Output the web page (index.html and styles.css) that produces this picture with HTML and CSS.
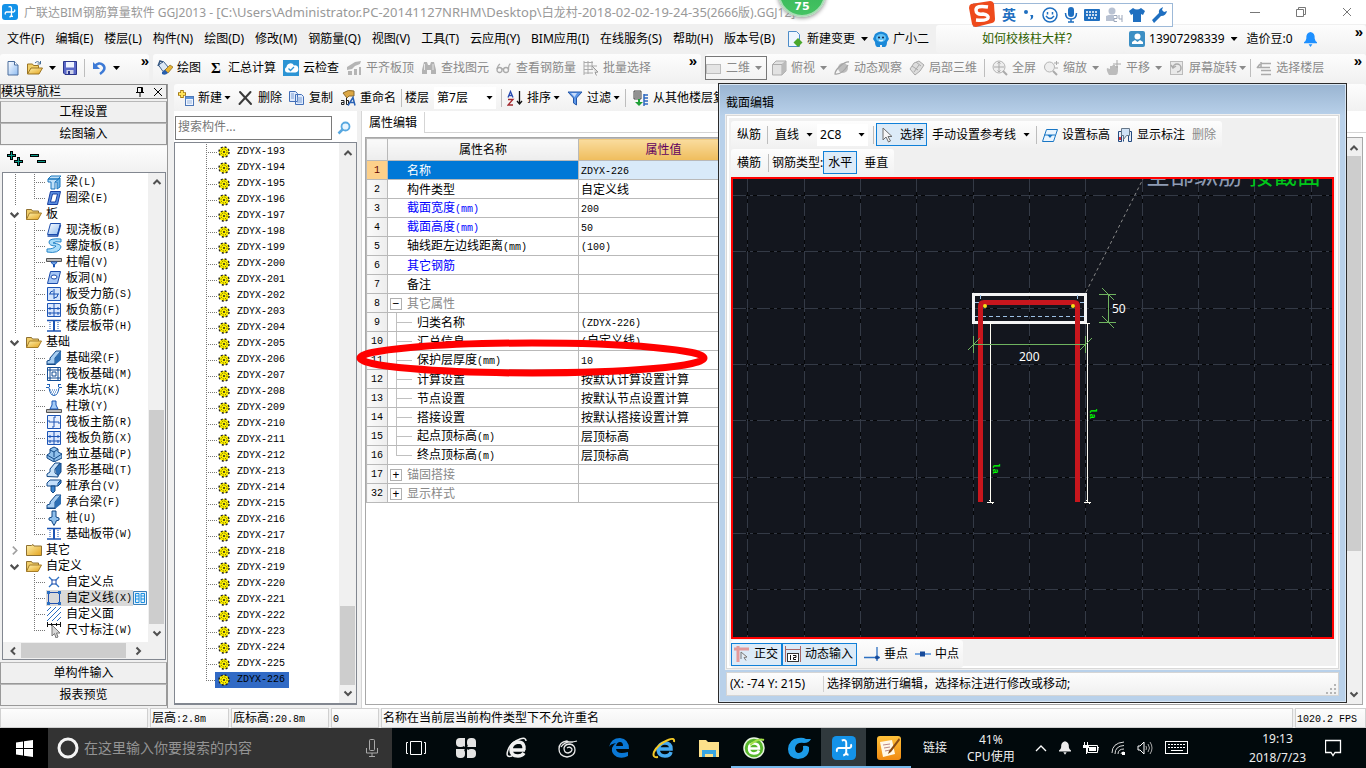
FILE: index.html
```html
<!DOCTYPE html>
<html lang="zh-CN">
<head>
<meta charset="utf-8">
<title>广联达BIM钢筋算量软件 GGJ2013</title>
<link rel="stylesheet" href="styles.css">
</head>
<body>
<svg class="defs" aria-hidden="true">
<defs>
<linearGradient id="gy" x1="0" y1="0" x2="1" y2="1"><stop offset="0" stop-color="#fff3b0"/><stop offset="1" stop-color="#e3a21c"/></linearGradient>
<linearGradient id="gb" x1="0" y1="0" x2="1" y2="1"><stop offset="0" stop-color="#fff"/><stop offset="1" stop-color="#8fbcf2"/></linearGradient>
<linearGradient id="go" x1="0" y1="0" x2="0" y2="1"><stop offset="0" stop-color="#ffc13a"/><stop offset="1" stop-color="#f08a12"/></linearGradient>
</defs>
<symbol id="logo" viewBox="0 0 16 16"><rect width="16" height="16" rx="3" fill="#1492e8"/><path d="M6.500 3q3-1 3 1.500v6q0 2-2 2.500M8 8H4.500Q2.500 8.500 3.500 10.500M8 8h3.500q2-.5 1-2.500M9.500 11q0 1.500 1.500 1.500" fill="none" stroke="#fff" stroke-width="1.300"/></symbol>
<symbol id="new" viewBox="0 0 16 16"><path d="M3 1.500h6.500l3.500 3.500v10H3z" fill="url(#gb)" stroke="#4a6c9c"/><path d="M9.500 1.500V5H13" fill="#fff" stroke="#4a6c9c"/></symbol>
<symbol id="open" viewBox="0 0 16 16"><path d="M.5 14V4h5l1 1.500h5V8" fill="#f1cf68" stroke="#9b7423"/><path d="M.5 14 4 8h11.500l-3.500 6z" fill="url(#gy)" stroke="#9b7423"/><path d="M8 3q3-3 5 .5M13.500 1v3h-3" fill="none" stroke="#446b94"/></symbol>
<symbol id="save" viewBox="0 0 16 16"><path d="M1.500 1.500h13v13H3l-1.500-1.500z" fill="#5a68c8" stroke="#2b368c"/><path d="M4 2h8v5.500H4z" fill="#eef2ff"/><path d="M4.500 10h7v4h-7z" fill="#cdd2e8"/><path d="M6 11h2v3H6z" fill="#2b368c"/></symbol>
<symbol id="undo" viewBox="0 0 16 16"><path d="M3 7q5-6 9-2t-3 9" fill="none" stroke="#3d7ad6" stroke-width="2.500"/><path d="M2 2v7h7z" fill="#3d7ad6"/></symbol>
<symbol id="paint" viewBox="0 0 16 16"><path d="m1.500 5 5-3.500 5 6-5.500 4z" fill="#dce8f6" stroke="#42628c"/><path d="M1 6 3 1l3 1" fill="none" stroke="#345680" stroke-width="1.500"/><path d="m8 10 5-5 3 2-5 6z" fill="#e8b432" stroke="#8c6818" stroke-width=".7"/><path d="m5 12 3-2 3 3q-3 3-6 1z" fill="#285fad"/></symbol>
<symbol id="cloud" viewBox="0 0 16 16"><rect width="16" height="16" fill="#2c94d4"/><path d="M4 12.500a3 3 0 0 1-.5-5.500A4 4 0 0 1 11 5.500a3.500 3.500 0 0 1 1.500 7z" fill="#fff"/><path d="m5.500 8.500 2 2L11 7" fill="none" stroke="#2c94d4" stroke-width="1.300"/></symbol>
<symbol id="align" viewBox="0 0 16 16"><path d="m1 7 8-5 6-1-1 3-5 2-3 3-5 1zM2 11h4v4H2zm6-2h3v6H8zm5-2h2v8h-2z" fill="#b5b5b5"/></symbol>
<symbol id="find" viewBox="0 0 16 16"><path d="M3 2h3l1 3h2l1-3h3l2 8v4h-5v-4H6v4H1v-4z" fill="#b3b3b3"/><path d="M3.500 4v6M12 4v6" stroke="#e7e7e7"/></symbol>
<symbol id="glasses" viewBox="0 0 16 16"><g fill="none" stroke="#aaa" stroke-width="1.300"><circle cx="3.500" cy="10" r="2.500"/><circle cx="10" cy="10" r="2.500"/><path d="M6 9h1.500M1 9q1-4 3-5M12.500 10q0-6 2-6"/></g></symbol>
<symbol id="batch" viewBox="0 0 16 16"><path d="M1 1v14M1 2.500h9M1 6h13M1 9.500h9M1 13h9M5 1v13M9 1v8" stroke="#aaa"/><path d="m9 6 6 6-3 .5 1.500 3" fill="#ddd" stroke="#999"/></symbol>
<symbol id="flat" viewBox="0 0 16 16"><rect x=".5" y="4.500" width="14" height="9" fill="#e4e4e4" stroke="#bdbdbd"/></symbol>
<symbol id="cube" viewBox="0 0 16 16"><path d="M1.500 4.500 5 1h10v10l-4 4H1.500z" fill="#e2e2e2" stroke="#adadad"/><path d="M1.500 4.500H11V15M11 4.500 15 1" fill="none" stroke="#adadad"/><path d="M11 5v10l4-4V1z" fill="#bbb"/></symbol>
<symbol id="orbit" viewBox="0 0 16 16"><circle cx="9" cy="8" r="5" fill="#bdbdbd"/><path d="M15 2C11 1 1 9 1 14q7 1 13-9" fill="none" stroke="#a5a5a5" stroke-width="1.300"/></symbol>
<symbol id="part" viewBox="0 0 16 16"><path d="m1 9 4-6 5-2 5 4-4 6-5 4z" fill="#ddd" stroke="#aaa"/><path d="m3 6 6 4M7 2l5 4M5 12l5-7" stroke="#aaa"/></symbol>
<symbol id="full" viewBox="0 0 16 16"><circle cx="7" cy="7" r="6" fill="#eee" stroke="#b4b4b4"/><path d="M7 2v10M2 7h10M5.500 3.500 7 2l1.500 1.500M5.500 10.500 7 12l1.500-1.500" fill="none" stroke="#aaa"/><path d="m11 11 4 4" stroke="#aaa" stroke-width="2"/></symbol>
<symbol id="mag" viewBox="0 0 16 16"><circle cx="6.500" cy="7" r="5" fill="#eee" stroke="#b4b4b4"/><path d="m10 11 4 4" stroke="#aaa" stroke-width="2"/><path d="M11 3h5M13.500 1v4M12 8h3" stroke="#aaa"/></symbol>
<symbol id="hand" viewBox="0 0 16 16"><path d="M3 15q-3-5-2-7l3 1V6h2l1-1h2v1h3v5q0 3-2 4z" fill="#bcbcbc"/><path d="M11 0v8M7 4h8" stroke="#a8a8a8"/></symbol>
<symbol id="rot" viewBox="0 0 16 16"><rect x="1.500" y="1.500" width="12" height="13" fill="#e9e9e9" stroke="#bbb"/><path d="M4 8a4 4 0 1 1 4 4M2 5l2 3 3-2" fill="none" stroke="#aaa" stroke-width="1.500"/></symbol>
<symbol id="floor" viewBox="0 0 16 16"><path d="M5 3.500h10M1 7.500h13M5 10.500h10M5 14.500h10M5 2v5M4 4 1 8" fill="none" stroke="#aaa" stroke-width="1.500"/></symbol>
<symbol id="add" viewBox="0 0 16 16"><path d="M4 0v8M0 4h8" stroke="#a57a10" stroke-width="3.500"/><path d="M4 1v6M1 4h6" stroke="#ffe35a" stroke-width="2"/><rect x="7.500" y="6.500" width="8" height="9" fill="#eef4ff" stroke="#4e78b8"/><path d="M8 7h7v2H8z" fill="#5d94dc"/><path d="M9 11h5M9 13h5" stroke="#9db8dc"/></symbol>
<symbol id="del" viewBox="0 0 16 16"><path d="m2 2 11 12M12.500 2 1.500 14" stroke="#3a3a3a" stroke-width="2" stroke-linecap="round"/></symbol>
<symbol id="copy" viewBox="0 0 16 16"><path d="M.5 1.500h6l2 2v8h-8zM6.500 4.500h6l2 2v8h-8z" fill="#dfeafc" stroke="#4470b8"/><path d="M2 4h3M2 6h3M2 8h3M8 8h5M8 10h5M8 12h5" stroke="#7d9fd4"/></symbol>
<symbol id="funnel" viewBox="0 0 16 16"><path d="M1 2h14l-5.500 6v7l-3-2V8z" fill="#5b96e8" stroke="#2457a8"/><path d="M4 3h6L7.500 7z" fill="#c8dcfa"/></symbol>
<symbol id="fromfl" viewBox="0 0 16 16"><path d="M1 1h7v8H1z" fill="#ddd" stroke="#444"/><path d="M2 3h5M2 5h5M2 7h5" stroke="#444"/><path d="M5 9v3H2l4 4 4-4H7V9z" fill="#1f9f36"/><path d="M11 4v12M11 5h4M11 8h4M11 11h4M11 14h4" stroke="#2c68c0" stroke-width="1.500"/></symbol>
<symbol id="change" viewBox="0 0 16 16"><path d="M1.500.5h8l3 3v12h-11z" fill="#edf6ff" stroke="#4d8cc8"/><path d="m11 7 4.500 4.500L11 16l-4.500-4.500z" fill="#4aa82c"/></symbol>
<symbol id="elf" viewBox="0 0 16 16"><path d="M2 3q6-5 12 0l2 5-2 3q0 4-2 5H9v-2H7v2H4q-2-1-2-5L0 8z" fill="#1b89d8"/><ellipse cx="8" cy="7" rx="5" ry="4" fill="#63c2f5"/><circle cx="6" cy="6.500" r="1" fill="#124"/><circle cx="10" cy="6.500" r="1" fill="#124"/><path d="M6 9q2 2 4 0" stroke="#fff" fill="none"/></symbol>
<symbol id="user" viewBox="0 0 16 16"><rect width="16" height="16" rx="2" fill="#3c8fc4"/><circle cx="8.500" cy="5.500" r="3" fill="#fff"/><path d="M3 13v-2l3-2 2.500 2L11 9l3 2v2z" fill="#fff"/></symbol>
<symbol id="bell" viewBox="0 0 14 16"><path d="M7 0q5 1 4.500 7 .5 3 2.500 4v1H0v-1q2-1 2.500-4Q2 1 7 0z" fill="currentColor"/><path d="M5 13h4l-2 3z" fill="currentColor"/></symbol>
<symbol id="pin" viewBox="0 0 10 10"><path d="M2.500 5.500V.5h5v5M1 5.500h8M5 6v4M6.500 1v4" fill="none" stroke="#000"/></symbol>
<symbol id="x" viewBox="0 0 10 10"><path d="m1 1 8 8M9 1 1 9" stroke="currentColor"/></symbol>
<symbol id="up" viewBox="0 0 10 10"><path d="m1.500 7 3.500-3.500L8.500 7" fill="none" stroke="#505050" stroke-width="2"/></symbol>
<symbol id="dn" viewBox="0 0 10 10"><path d="m1.500 3.500 3.500 3.500 3.500-3.500" fill="none" stroke="#505050" stroke-width="2"/></symbol>
<symbol id="lf" viewBox="0 0 10 10"><path d="M7 1.500 3.500 5 7 8.500" fill="none" stroke="#505050" stroke-width="2"/></symbol>
<symbol id="rt" viewBox="0 0 10 10"><path d="M3.500 1.500 7 5 3.500 8.500" fill="none" stroke="#505050" stroke-width="2"/></symbol>
<symbol id="rtg" viewBox="0 0 10 10"><path d="M3.500 1.500 7 5 3.500 8.500" fill="none" stroke="#a0a0a0" stroke-width="1.500"/></symbol>
<symbol id="plus2" viewBox="0 0 16 16"><path d="M4.500 0v9M0 4.500h9M11.500 6v9M7 10.500h9" stroke="#000" stroke-width="3"/><path d="M4.500 1v7M1 4.500h7M11.500 7v7M8 10.500h7" stroke="#0a9a8a"/></symbol>
<symbol id="minus2" viewBox="0 0 16 16"><path d="M0 4.500h9M7 10.500h9" stroke="#000" stroke-width="3"/><path d="M1 4.500h7M8 10.500h7" stroke="#0a9a8a"/></symbol>
<symbol id="fold" viewBox="0 0 16 16"><path d="M.5 13.500v-10h5l1 1.500h6v2" fill="#f0cd69" stroke="#8f7030"/><path d="m.5 13.500 3-6.500h12l-3.500 6.500z" fill="url(#gy)" stroke="#a57d28"/></symbol>
<symbol id="foldc" viewBox="0 0 16 16"><path d="M.5 13.500v-10h5l1.500-1 1 1.500h7.500v9.500z" fill="url(#gy)" stroke="#8f7030"/></symbol>
<symbol id="liang" viewBox="0 0 16 16"><path d="M2 5 5 2h10l-3 3zM2 5h10v3H9v7H5V8H2z" fill="#bfe0f8" stroke="#1b76bd"/><path d="m9 8 5-4v9l-3 2V8" fill="#6fb3e6" stroke="#1b76bd"/></symbol>
<symbol id="quan" viewBox="0 0 16 16"><path d="M4.500 1.500h10l-3 13h-10z" fill="#5a8de0" stroke="#173fa0"/><path d="M6.500 4h5l-2 8h-5z" fill="#fff" stroke="#173fa0"/></symbol>
<symbol id="ban" viewBox="0 0 16 16"><path d="M4.500 1.500h10l-3 11h-10z" fill="url(#gb)" stroke="#1a4bab"/><path d="M1.500 14h10l3-11" fill="none" stroke="#1a4bab" stroke-width="1.500"/></symbol>
<symbol id="spiral" viewBox="0 0 16 16"><path d="M15 1Q3 0 3 4t7 4Q8 11 1 11v3q12 2 14-5 0-3-8-4 2-2 8-1z" fill="#a8dcfa" stroke="#2584c8"/></symbol>
<symbol id="cap" viewBox="0 0 16 16"><path d="M.5 4.500h15v3H.5z" fill="#bbb" stroke="#555"/><path d="M5 8h6l-1.500 2h-1v3h-1v-3h-1z" fill="#9cc6f5" stroke="#1a54b5"/></symbol>
<symbol id="hole" viewBox="0 0 16 16"><path d="M4.500 1.500h10l-3 12h-10z" fill="#a5c6f5" stroke="#1a4bab"/><ellipse cx="8" cy="7" rx="3" ry="2" fill="#fff" stroke="#1a4bab"/></symbol>
<symbol id="bar1" viewBox="0 0 16 16"><path d="M1.500 1.500h13v13h-13z" fill="#d5e5fc" stroke="#1d55b5"/><path d="M3 8h10M8 3v10M4 8q0-3 3-3M12 8q0 4-4 4" fill="none" stroke="#1d55b5"/></symbol>
<symbol id="bar2" viewBox="0 0 16 16"><path d="M1.500 1.500h13v13h-13z" fill="#dbe8fd" stroke="#1d55b5"/><path d="M2 6.500h12M2 11h12M8 2v12M4 5v3M12 5v3M4 10v3M12 10v3" stroke="#1d55b5"/></symbol>
<symbol id="strip" viewBox="0 0 16 16"><path d="M1 2.500h14M1 13h14" stroke="#1d55b5" stroke-width="1.500"/><path d="M4 4v8M12 4v8" stroke="#1d55b5" stroke-dasharray="1 1"/><path d="M8 3v10" stroke="#1d55b5" stroke-width="2"/></symbol>
<symbol id="fbeam" viewBox="0 0 16 16"><path d="m4 8 6-7h5L9 8v6H1v-3l3-1z" fill="#a7cef2" stroke="#124886"/><path d="M9 8 15 1v9l-6 5z" fill="#2d6fb4"/><path d="M.5 14.500h9" stroke="#124886"/></symbol>
<symbol id="raft" viewBox="0 0 16 16"><path d="M1.500 1.500h13v13h-13zM4 1v14M12 1v14M1 4h14M1 12h14M6 6h4v4H6z" fill="none" stroke="#124c94"/></symbol>
<symbol id="pit" viewBox="0 0 16 16"><path d="M0 5.500h3q1 8 5 8t5-8h3M3.500 5V2M12.500 5V2M1 2.500h3M12 2.500h3" fill="none" stroke="#1d62b8"/><path d="M4 8h8M5 10h6M6 12h4" stroke="#1d62b8" stroke-dasharray="1 1"/></symbol>
<symbol id="pier" viewBox="0 0 16 16"><path d="M.5 11.500h15v3H.5z" fill="#bbb" stroke="#555"/><path d="m4 11 2-4V3h4v4l2 4z" fill="#a5ccf7" stroke="#1a54b5"/></symbol>
<symbol id="bar3" viewBox="0 0 16 16"><path d="M1.500 1.500h13v13h-13z" fill="#e9f1fe" stroke="#1d55b5"/><path d="M3 8h10M8 3v10M3 6v2M13 8v2M8 3h2M6 13h2" stroke="#1d55b5"/></symbol>
<symbol id="iso" viewBox="0 0 16 16"><path d="m1 9 3-2V3l4-2 4 2v3l4 2v4l-8 4-7-4z" fill="#8fc0ec" stroke="#124886"/><path d="m1 9 7 4 8-5M8 13v3M4 4l4 2 4-3M8 6v5" fill="none" stroke="#124886"/></symbol>
<symbol id="tiao" viewBox="0 0 16 16"><path d="m9 6 6-5v9l-4 5" fill="#2d6fb4" stroke="#124886"/><path d="M1 14.500V12l3-2V7l5-6h5L9 7v4l3 2v2z" fill="#c9e2f8" stroke="#124886"/></symbol>
<symbol id="pcap" viewBox="0 0 16 16"><path d="m1 5 3-3h11l-3 3v3H1z" fill="#c3defa" stroke="#124886"/><path d="m12 5 3-3v3l-3 3" fill="#3d86d0" stroke="#124886"/><path d="M5 8h4v5l-2 2-2-2z" fill="#3d86d0" stroke="#124886"/></symbol>
<symbol id="pile" viewBox="0 0 16 16"><path d="M6 1h4v6l3 1v2l-3 1v1l-2 3.500L6 12v-1l-3-1V8l3-1z" fill="#8fc0ec" stroke="#124886"/></symbol>
<symbol id="cpt" viewBox="0 0 16 16"><path d="m3 3 10 10M13 3 3 13" stroke="#2b6fc2" stroke-width="1.300"/><path d="M6 6h4v4H6z" fill="#fff" stroke="#1a4bab"/></symbol>
<symbol id="cln" viewBox="0 0 16 16"><path d="M2.500 2.500h11v11h-11z" fill="none" stroke="#2150b0"/><path d="M1 1h3v3H1zm11 0h3v3h-3zM1 12h3v3H1zm11 0h3v3h-3z" fill="#2b6fc2"/></symbol>
<symbol id="cfc" viewBox="0 0 16 16"><path d="m1 5 4-4M1 10l9-9M1 15 15 1M6 15l9-9M11 15l4-4" stroke="#2b6fc2"/></symbol>
<symbol id="dim" viewBox="0 0 16 16"><path d="M1.500 0v5M14.500 0v5M1 2.500h14M5.500 1v3M10.500 1v3" stroke="#111"/><path d="M6 3v11l2.500-2.500L10 16l2-1-1.500-4H14z" fill="#d8d8d8" stroke="#777"/></symbol>
<symbol id="book" viewBox="0 0 14 14"><path d="M.5.5h13v13H.5z" fill="#e4f2fd" stroke="#3b7fb8"/><path d="M2.500 2.500h3.500v9H2.500zM8 2.500h3.500v9H8zM3 5h3M3 8h3M8 5h3M8 8h3" fill="none" stroke="#1b8fe0"/></symbol>
<symbol id="gear" viewBox="0 0 12 12"><circle cx="6" cy="6" r="5" fill="#fff200" stroke="#222" stroke-width="1.500" stroke-dasharray="2 1.930"/><circle cx="6" cy="6" r="4.300" fill="#fff200"/><circle cx="6" cy="6" r="3" fill="none" stroke="#5d5800" stroke-width="1" stroke-dasharray="1.200 1.156"/><circle cx="6" cy="6" r="1" fill="#222"/></symbol>
<symbol id="seek" viewBox="0 0 14 14"><circle cx="8.500" cy="5.500" r="4" fill="#e9f5ff" stroke="#58a8e0" stroke-width="1.800"/><path d="M5.500 8.500 1.500 12.500" stroke="#58a8e0" stroke-width="2.500"/></symbol>
<symbol id="arrow" viewBox="0 0 12 16"><path d="M2 1v12l3-3 2.500 5 2-1L7 9.500h4z" fill="#f6f6f6" stroke="#6d6d6d"/></symbol>
<symbol id="elev" viewBox="0 0 16 16"><path d="M4.500 2.500h11l-4 12H.5zM2 8h11" fill="#eaf5ff" stroke="#1976c4"/><path d="M5.500 8h5L8 11z" fill="#1976c4"/></symbol>
<symbol id="mark" viewBox="0 0 16 16"><path d="M1.500 4.500h3v10h-3zM11.500 4.500h3v10h-3zM4.500 14.500v-6h2v6" fill="#e8eef8" stroke="#244a80"/><path d="M4.500 1.500h8v7h-3l-3 4v-4h-2z" fill="#cfe2f7" stroke="#678"/><path d="M2 10h2v3H2z" fill="#d33"/></symbol>
<symbol id="ortho" viewBox="0 0 16 16"><path d="M0 3h15M4 0v16" stroke="#e39a9a" stroke-width="3"/><path d="m7 6 6 5-3 .5 2 3M7 6v7" fill="#eee" stroke="#777"/></symbol>
<symbol id="perp" viewBox="0 0 16 16"><path d="M0 11.500h16M13 1v14" stroke="#2d70c2" stroke-width="1.300"/><circle cx="13" cy="11.500" r="2" fill="#174a9a"/></symbol>
<symbol id="mid" viewBox="0 0 16 16"><path d="M0 8h16" stroke="#7aa8e0" stroke-width="2"/><rect x="5" y="5.500" width="5" height="5" fill="#174a9a"/></symbol>
</svg>

<header class="titlebar">
  <svg class="i16"><use href="#logo"/></svg>
  <h1 class="title">广联达BIM钢筋算量软件 GGJ2013 - <span class="path">[C:\Users\Administrator.PC-20141127NRHM\Desktop\</span>白龙村<span class="path">-2018-02-02-19-24-35</span>(2666版).GGJ12]</h1>
  <div class="winctl">
    <button aria-label="最小化"><svg width="10" height="10" viewBox="0 0 10 10"><path d="M0 5.500h10" stroke="#777"/></svg></button>
    <button aria-label="还原"><svg width="10" height="10" viewBox="0 0 10 10"><path d="M.5 2.500h7v7h-7zM2.500 2V.5h7v7H8" fill="none" stroke="#777"/></svg></button>
    <button aria-label="关闭"><svg class="gx" width="10" height="10"><use href="#x"/></svg></button>
  </div>
</header>
<div class="ball">75</div>
<div class="ime">
  <svg class="sogou" viewBox="0 0 28 28"><path d="M3 4 22 1q3 0 4 3l1 15q0 3-3 4L8 27q-3 0-4-3L1 8q0-3 2-4z" fill="#ee4a1c"/><path d="M20 7Q8 5 8 10t7 4q6 1 5 4t-12 2" fill="none" stroke="#fff" stroke-width="3.500"/></svg>
  <b>英</b>
  <svg width="14" height="14" viewBox="0 0 14 14"><circle cx="4" cy="4" r="2" fill="#1f6fc0"/><path d="M8 7h3q1 4-3 5 2-3 0-5z" fill="#1f6fc0"/></svg>
  <svg width="16" height="16" viewBox="0 0 16 16"><circle cx="8" cy="8" r="7" fill="none" stroke="#1f6fc0" stroke-width="1.500"/><path d="M5.500 5v2.500M10.500 5v2.500M4 9q4 5 8 0" fill="none" stroke="#1f6fc0" stroke-width="1.500"/></svg>
  <svg width="14" height="16" viewBox="0 0 14 16"><rect x="4" y="0" width="6" height="10" rx="3" fill="#1f6fc0"/><path d="M1.500 6q0 6 5.500 6t5.500-6M7 12v3M4 15h6" fill="none" stroke="#1f6fc0" stroke-width="1.500"/></svg>
  <svg width="16" height="12" viewBox="0 0 16 12"><rect width="16" height="12" rx="1" fill="#1f6fc0"/><path d="M2 3h12M2 6h12M4 9h8" stroke="#fff" stroke-width="1.500" stroke-dasharray="2 1"/></svg>
  <svg width="17" height="16" viewBox="0 0 17 16"><circle cx="6" cy="4" r="3.500" fill="#b9c2d2"/><path d="M0 14V9q4-2 8-1v6z" fill="#b9c2d2"/><path d="M8 8.500h3v3H8v3h3M13 8v4h3V8M16 12v3" fill="none" stroke="#9ba6ba"/></svg>
  <svg width="16" height="14" viewBox="0 0 16 14"><path d="M4 0q4 3 8 0l4 3-2 4-2-1v8H4V6L2 7 0 3z" fill="#1f6fc0"/></svg>
  <svg width="16" height="16" viewBox="0 0 16 16"><path d="M1 13 8 6q-1-4 4-6l-1 3 2 2 3-1q-1 5-6 5l-7 7z" fill="#1f6fc0"/></svg>
</div>

<div class="menubar">
  <nav class="menu">
    <button>文件(F)</button><button>编辑(E)</button><button>楼层(L)</button><button>构件(N)</button><button>绘图(D)</button><button>修改(M)</button><button>钢筋量(Q)</button><button>视图(V)</button><button>工具(T)</button><button>云应用(Y)</button><button>BIM应用(I)</button><button>在线服务(S)</button><button>帮助(H)</button><button>版本号(B)</button>
  </nav>
  <button class="tb"><svg class="i16"><use href="#change"/></svg>新建变更<i class="caret"></i></button>
  <button class="tb"><svg class="i16"><use href="#elf"/></svg>广小二</button>
  <div class="strip tip"><a href="#tip">如何校核柱大样？</a></div>
  <div class="strip account">
    <button class="tb"><svg class="i16"><use href="#user"/></svg>13907298339<i class="caret"></i></button>
    <span>造价豆:0</span>
    <svg class="blue" width="13" height="15"><use href="#bell"/></svg>
    <span class="more end">»</span>
  </div>
</div>

<div class="toolbars">
  <div class="strip files">
    <button class="tb" aria-label="新建文件"><svg class="i16"><use href="#new"/></svg></button>
    <button class="tb" aria-label="打开"><svg class="i16"><use href="#open"/></svg><i class="caret"></i></button>
    <button class="tb" aria-label="保存"><svg class="i16"><use href="#save"/></svg></button>
    <i class="sep"></i>
    <button class="tb" aria-label="撤销"><svg class="i16"><use href="#undo"/></svg><i class="caret"></i></button>
    <span class="more end">»</span>
  </div>
  <div class="strip draw">
    <button class="tb"><svg class="i16"><use href="#paint"/></svg>绘图</button>
    <button class="tb"><span class="sigma">Σ</span>汇总计算</button>
    <button class="tb"><svg class="i16"><use href="#cloud"/></svg>云检查</button>
    <button class="tb off"><svg class="i16"><use href="#align"/></svg>平齐板顶</button>
    <button class="tb off"><svg class="i16"><use href="#find"/></svg>查找图元</button>
    <button class="tb off"><svg class="i16"><use href="#glasses"/></svg>查看钢筋量</button>
    <button class="tb off"><svg class="i16"><use href="#batch"/></svg>批量选择</button>
    <span class="more end">»</span>
  </div>
  <div class="strip view">
    <button class="tb off boxed"><svg class="i16"><use href="#flat"/></svg>二维<i class="caret"></i></button>
    <button class="tb off"><svg class="i16"><use href="#cube"/></svg>俯视<i class="caret"></i></button>
    <button class="tb off"><svg class="i16"><use href="#orbit"/></svg>动态观察</button>
    <button class="tb off"><svg class="i16"><use href="#part"/></svg>局部三维</button>
    <i class="sep"></i>
    <button class="tb off"><svg class="i16"><use href="#full"/></svg>全屏</button>
    <button class="tb off"><svg class="i16"><use href="#mag"/></svg>缩放<i class="caret"></i></button>
    <button class="tb off"><svg class="i16"><use href="#hand"/></svg>平移<i class="caret"></i></button>
    <button class="tb off tight"><svg class="i16"><use href="#rot"/></svg>屏幕旋转<i class="caret"></i></button>
    <i class="sep"></i>
    <button class="tb off"><svg class="i16"><use href="#floor"/></svg>选择楼层</button>
    <span class="more end">»</span>
  </div>
</div>

<main class="main">
  <aside class="nav">
    <div class="navhead"><h2>模块导航栏</h2><svg width="10" height="10"><use href="#pin"/></svg><svg width="10" height="10"><use href="#x"/></svg></div>
    <button class="bar">工程设置</button>
    <button class="bar">绘图输入</button>
    <div class="navtools"><button aria-label="全部展开"><svg class="i16"><use href="#plus2"/></svg></button><button aria-label="全部折叠"><svg class="i16"><use href="#minus2"/></svg></button></div>
    <div class="tree">
      <ul class="nodes">
        <li class="leaf"><svg class="i16"><use href="#liang"/></svg>梁<i class="m">(L)</i></li>
        <li class="leaf last"><svg class="i16"><use href="#quan"/></svg>圈梁<i class="m">(E)</i></li>
        <li class="dir"><svg class="chev"><use href="#dn"/></svg><svg class="i16"><use href="#fold"/></svg>板</li>
        <li class="leaf"><svg class="i16"><use href="#ban"/></svg>现浇板<i class="m">(B)</i></li>
        <li class="leaf"><svg class="i16"><use href="#spiral"/></svg>螺旋板<i class="m">(B)</i></li>
        <li class="leaf"><svg class="i16"><use href="#cap"/></svg>柱帽<i class="m">(V)</i></li>
        <li class="leaf"><svg class="i16"><use href="#hole"/></svg>板洞<i class="m">(N)</i></li>
        <li class="leaf"><svg class="i16"><use href="#bar1"/></svg>板受力筋<i class="m">(S)</i></li>
        <li class="leaf"><svg class="i16"><use href="#bar2"/></svg>板负筋<i class="m">(F)</i></li>
        <li class="leaf last"><svg class="i16"><use href="#strip"/></svg>楼层板带<i class="m">(H)</i></li>
        <li class="dir"><svg class="chev"><use href="#dn"/></svg><svg class="i16"><use href="#fold"/></svg>基础</li>
        <li class="leaf"><svg class="i16"><use href="#fbeam"/></svg>基础梁<i class="m">(F)</i></li>
        <li class="leaf"><svg class="i16"><use href="#raft"/></svg>筏板基础<i class="m">(M)</i></li>
        <li class="leaf"><svg class="i16"><use href="#pit"/></svg>集水坑<i class="m">(K)</i></li>
        <li class="leaf"><svg class="i16"><use href="#pier"/></svg>柱墩<i class="m">(Y)</i></li>
        <li class="leaf"><svg class="i16"><use href="#bar3"/></svg>筏板主筋<i class="m">(R)</i></li>
        <li class="leaf"><svg class="i16"><use href="#bar2"/></svg>筏板负筋<i class="m">(X)</i></li>
        <li class="leaf"><svg class="i16"><use href="#iso"/></svg>独立基础<i class="m">(P)</i></li>
        <li class="leaf"><svg class="i16"><use href="#tiao"/></svg>条形基础<i class="m">(T)</i></li>
        <li class="leaf"><svg class="i16"><use href="#pcap"/></svg>桩承台<i class="m">(V)</i></li>
        <li class="leaf"><svg class="i16"><use href="#fbeam"/></svg>承台梁<i class="m">(F)</i></li>
        <li class="leaf"><svg class="i16"><use href="#pile"/></svg>桩<i class="m">(U)</i></li>
        <li class="leaf last"><svg class="i16"><use href="#strip"/></svg>基础板带<i class="m">(W)</i></li>
        <li class="dir"><svg class="chev"><use href="#rtg"/></svg><svg class="i16"><use href="#foldc"/></svg>其它</li>
        <li class="dir"><svg class="chev"><use href="#dn"/></svg><svg class="i16"><use href="#fold"/></svg>自定义</li>
        <li class="leaf tail"><svg class="i16"><use href="#cpt"/></svg>自定义点</li>
        <li class="leaf tail"><span class="cur"><svg class="i16"><use href="#cln"/></svg>自定义线<i class="m">(X)</i></span><svg width="14" height="14"><use href="#book"/></svg></li>
        <li class="leaf tail"><svg class="i16"><use href="#cfc"/></svg>自定义面</li>
        <li class="leaf tail last"><svg class="i16"><use href="#dim"/></svg>尺寸标注<i class="m">(W)</i></li>
      </ul>
      <div class="vscroll"><svg><use href="#up"/></svg><i class="rest"></i><i class="thumb"></i><svg><use href="#dn"/></svg></div>
      <div class="hscroll"><svg><use href="#lf"/></svg><i class="thumb"></i><svg><use href="#rt"/></svg></div>
    </div>
    <button class="bar">单构件输入</button>
    <button class="bar">报表预览</button>
  </aside>

  <section class="work">
    <div class="strip comps">
      <button class="tb"><svg class="i16"><use href="#add"/></svg>新建<i class="caret near"></i></button>
      <button class="tb"><svg class="i16"><use href="#del"/></svg>删除</button>
      <button class="tb"><svg class="i16"><use href="#copy"/></svg>复制</button>
      <button class="tb"><svg class="i16" viewBox="0 0 16 16"><path d="M3 3q5-4 11-2v5H9L7 8z" fill="#dca744" stroke="#8b6a2c"/><path d="M1 10.500h3v4H1.500v-2H4M6.500 8v6.500h2v-4h-2" fill="none" stroke="#222"/><path d="m8 15.500 5-8 2 8M10.500 12.500h4" fill="none" stroke="#2a62b5" stroke-width="1.500"/></svg>重命名</button>
      <i class="sep"></i>
      <label for="floorsel">楼层</label>
      <span class="combo wide"><select id="floorsel"><option>第7层</option></select><i class="caret"></i></span>
      <i class="sep"></i>
      <button class="tb"><svg class="i16" viewBox="0 0 16 16"><path d="m1 7.500 2.500-6 2.500 6M2 5.500h3" fill="none" stroke="#274bb0" stroke-width="1.300"/><path d="M1 9.500h5l-5 5.500h5" fill="none" stroke="#a3282e" stroke-width="1.300"/><path d="M12.500 1v13M10 11l2.500 3 2.500-3" fill="none" stroke="#111" stroke-width="1.300"/></svg>排序<i class="caret near"></i></button>
      <button class="tb"><svg class="i16"><use href="#funnel"/></svg>过滤<i class="caret near"></i></button>
      <i class="sep"></i>
      <button class="tb"><svg class="i16"><use href="#fromfl"/></svg>从其他楼层复制构件</button>
    </div>
    <div class="cols">
      <div class="list">
        <div class="search"><input type="text" placeholder="搜索构件..." aria-label="搜索构件"><button aria-label="搜索"><svg width="14" height="14"><use href="#seek"/></svg></button></div>
        <div class="listbox">
          <ul class="items">
            <li><svg><use href="#gear"/></svg>ZDYX-193</li><li><svg><use href="#gear"/></svg>ZDYX-194</li>
            <li><svg><use href="#gear"/></svg>ZDYX-195</li><li><svg><use href="#gear"/></svg>ZDYX-196</li>
            <li><svg><use href="#gear"/></svg>ZDYX-197</li><li><svg><use href="#gear"/></svg>ZDYX-198</li>
            <li><svg><use href="#gear"/></svg>ZDYX-199</li><li><svg><use href="#gear"/></svg>ZDYX-200</li>
            <li><svg><use href="#gear"/></svg>ZDYX-201</li><li><svg><use href="#gear"/></svg>ZDYX-202</li>
            <li><svg><use href="#gear"/></svg>ZDYX-203</li><li><svg><use href="#gear"/></svg>ZDYX-204</li>
            <li><svg><use href="#gear"/></svg>ZDYX-205</li><li><svg><use href="#gear"/></svg>ZDYX-206</li>
            <li><svg><use href="#gear"/></svg>ZDYX-207</li><li><svg><use href="#gear"/></svg>ZDYX-208</li>
            <li><svg><use href="#gear"/></svg>ZDYX-209</li><li><svg><use href="#gear"/></svg>ZDYX-210</li>
            <li><svg><use href="#gear"/></svg>ZDYX-211</li><li><svg><use href="#gear"/></svg>ZDYX-212</li>
            <li><svg><use href="#gear"/></svg>ZDYX-213</li><li><svg><use href="#gear"/></svg>ZDYX-214</li>
            <li><svg><use href="#gear"/></svg>ZDYX-215</li><li><svg><use href="#gear"/></svg>ZDYX-216</li>
            <li><svg><use href="#gear"/></svg>ZDYX-217</li><li><svg><use href="#gear"/></svg>ZDYX-218</li>
            <li><svg><use href="#gear"/></svg>ZDYX-219</li><li><svg><use href="#gear"/></svg>ZDYX-220</li>
            <li><svg><use href="#gear"/></svg>ZDYX-221</li><li><svg><use href="#gear"/></svg>ZDYX-222</li>
            <li><svg><use href="#gear"/></svg>ZDYX-223</li><li><svg><use href="#gear"/></svg>ZDYX-224</li>
            <li><svg><use href="#gear"/></svg>ZDYX-225</li><li class="last"><span class="pick"><svg><use href="#gear"/></svg>ZDYX-226</span></li>
          </ul>
          <div class="vscroll"><svg><use href="#up"/></svg><i class="rest"></i><i class="thumb"></i><svg><use href="#dn"/></svg></div>
        </div>
      </div>
      <div class="props">
        <div class="tabs"><button class="tab">属性编辑</button><i class="fill"></i></div>
        <div class="sheet">
          <table>
            <colgroup><col class="c1"><col class="c2"><col class="c3"></colgroup>
            <thead><tr><th></th><th>属性名称</th><th class="hot">属性值</th></tr></thead>
            <tbody>
              <tr class="sel"><th>1</th><td class="nm">名称</td><td><i class="m">ZDYX-226</i></td></tr>
              <tr><th>2</th><td class="nm">构件类型</td><td>自定义线</td></tr>
              <tr><th>3</th><td class="nm key">截面宽度<i class="m">(mm)</i></td><td><i class="m">200</i></td></tr>
              <tr><th>4</th><td class="nm key">截面高度<i class="m">(mm)</i></td><td><i class="m">50</i></td></tr>
              <tr><th>5</th><td class="nm">轴线距左边线距离<i class="m">(mm)</i></td><td><i class="m">(100)</i></td></tr>
              <tr><th>6</th><td class="nm key">其它钢筋</td><td></td></tr>
              <tr><th>7</th><td class="nm">备注</td><td></td></tr>
              <tr><th>8</th><td class="grp"><button class="tog">−</button>其它属性</td><td></td></tr>
              <tr><th>9</th><td class="sub">归类名称</td><td><i class="m">(ZDYX-226)</i></td></tr>
              <tr><th>10</th><td class="sub">汇总信息</td><td><i class="m">(</i>自定义线<i class="m">)</i></td></tr>
              <tr><th>11</th><td class="sub">保护层厚度<i class="m">(mm)</i></td><td><i class="m">10</i></td></tr>
              <tr><th>12</th><td class="sub">计算设置</td><td>按默认计算设置计算</td></tr>
              <tr><th>13</th><td class="sub">节点设置</td><td>按默认节点设置计算</td></tr>
              <tr><th>14</th><td class="sub">搭接设置</td><td>按默认搭接设置计算</td></tr>
              <tr><th>15</th><td class="sub">起点顶标高<i class="m">(m)</i></td><td>层顶标高</td></tr>
              <tr><th>16</th><td class="sub last">终点顶标高<i class="m">(m)</i></td><td>层顶标高</td></tr>
              <tr><th>17</th><td class="grp"><button class="tog">+</button>锚固搭接</td><td></td></tr>
              <tr><th>32</th><td class="grp"><button class="tog">+</button>显示样式</td><td></td></tr>
            </tbody>
          </table>
          <div class="vscroll"><svg><use href="#up"/></svg><i class="thumb"></i><i class="rest"></i><svg><use href="#dn"/></svg></div>
        </div>
      </div>
    </div>
  </section>
</main>

<svg class="ring" viewBox="0 0 354 38"><ellipse cx="177" cy="19" rx="172" ry="15" fill="none" stroke="#f00" stroke-width="7"/></svg>

<section class="dialog" role="dialog" aria-labelledby="dlgt">
  <h2 id="dlgt">截面编辑</h2>
  <div class="client">
    <div class="strip rowa">
      <button class="tb">纵筋</button><i class="sep"></i>
      <button class="tb">直线<i class="caret"></i></button>
      <span class="combo"><select aria-label="钢筋规格"><option>2C8</option></select><i class="caret"></i></span>
      <i class="sep"></i>
      <button class="tb on"><svg width="12" height="16"><use href="#arrow"/></svg><span>选择</span></button>
      <button class="tb">手动设置参考线<i class="caret"></i></button>
      <i class="sep"></i>
      <button class="tb"><svg class="i16"><use href="#elev"/></svg>设置标高</button>
      <button class="tb"><svg class="i16"><use href="#mark"/></svg>显示标注</button>
      <button class="tb off">删除</button>
    </div>
    <div class="strip rowb">
      <button class="tb">横筋</button><i class="sep"></i>
      <span>钢筋类型:</span><button class="tb on">水平</button><button class="tb">垂直</button>
    </div>
    <svg class="canvas" viewBox="733 179 600 458" preserveAspectRatio="xMinYMin slice">
      <g stroke="#050608">
        <path d="M747.500 179v460M804.500 179v460M860.500 179v460M916.500 179v460M973.500 179v460M1029.500 179v460M1085.500 179v460M1142.500 179v460M1198.500 179v460M1254.500 179v460M1311.500 179v460"/>
        <path d="M733 195.500h602M733 251.500h602M733 308.500h602M733 364.500h602M733 420.500h602M733 477.500h602M733 533.500h602M733 589.500h602"/>
      </g>
      <g stroke="#343a46" stroke-dasharray="13 4 3 4">
        <path d="M747.500 179v460M804.500 179v460M860.500 179v460M916.500 179v460M973.500 179v460M1029.500 179v460M1085.500 179v460M1142.500 179v460M1198.500 179v460M1254.500 179v460M1311.500 179v460"/>
        <path d="M733 195.500h602M733 251.500h602M733 308.500h602M733 364.500h602M733 420.500h602M733 477.500h602M733 533.500h602M733 589.500h602"/>
      </g>
      <path d="m1086 292 57-113" stroke="#8a8a8a" stroke-dasharray="3 3"/>
      <text class="big" x="1146" y="184" fill="#8f9cb4">全部纵筋</text><text class="big" x="1249" y="184" fill="#00c81a">按截面</text>
      <rect x="973.500" y="294.500" width="112" height="28" fill="none" stroke="#f4f4f4" stroke-width="3"/>
      <path d="M975 302.500h110M975 316.500h110M980.500 295v7M1077.500 295v7" stroke="#9cc0e4" stroke-dasharray="4 3"/>
      <path d="M980.500 502V306q0-3.500 3.500-3.500h90q3.500 0 3.500 3.500v196" fill="none" stroke="#c8161d" stroke-width="5"/>
      <circle cx="985" cy="306" r="2" fill="#f5e11a"/><circle cx="1073" cy="306" r="2" fill="#f5e11a"/>
      <path d="M990.500 323v179M1087.500 323v179M987 323.500h6M1084 323.500h6M987 502.500h7M1084 502.500h7M989 500l4 4M1086 500l4 4" stroke="#fffdf4"/>
      <path d="M973.500 336v17M1085.500 336v17M973 344.500h113M968 350l12-12M1080 350l12-12M1099 294.500h17M1099 322.500h17M1108.500 294v29M1102 288l12 12M1102 316l12 12" stroke="#6fb35f"/>
      <text class="num" x="1019" y="361" fill="#fff">200</text><text class="num" x="1112" y="313" fill="#fff">50</text>
      <text class="la" transform="translate(993 463) rotate(90)">la</text><text class="la" transform="translate(1090 408) rotate(90)">la</text>
    </svg>
    <div class="strip rowc">
      <button class="tb on"><svg class="i16"><use href="#ortho"/></svg>正交</button><button class="tb on"><svg class="i16" viewBox="0 0 16 16"><path d="M.5 0v16M15.500 0v16M1 3.500h14" stroke="#a66"/><rect x="2.500" y="7.500" width="11" height="8" fill="#fff" stroke="#333"/><path d="M5.500 9v5M8 9.500h3v2H8.500v2H11" fill="none" stroke="#111"/></svg>动态输入</button>
      <button class="tb"><svg class="i16"><use href="#perp"/></svg>垂点</button><button class="tb"><svg class="i16"><use href="#mid"/></svg>中点</button>
    </div>
  </div>
  <div class="dstat"><span class="xy">(X: -74 Y: 215)</span><span class="hint">选择钢筋进行编辑，选择标注进行修改或移动;</span><svg width="12" height="12" viewBox="0 0 12 12"><path d="M8 2h2M4 6h2M8 6h2M0 10h2M4 10h2M8 10h2" stroke="#b5b5b5" stroke-width="2"/></svg></div>
</section>

<footer class="status">
  <span class="s1"></span><span class="s2">层高<i class="m">:2.8m</i></span><span class="s3">底标高<i class="m">:20.8m</i></span><span class="s4"><i class="m">0</i></span><span class="s5">名称在当前层当前构件类型下不允许重名</span><span class="s6"><i class="m">1020.2 FPS</i></span>
</footer>

<div class="taskbar">
  <button class="start" aria-label="开始"><svg width="17" height="17" viewBox="0 0 17 17"><path d="m0 2.500 7-1V8H0zM8 1.300 17 0v8H8zM0 9h7v6.500l-7-1zM8 9h9v8l-9-1.300z" fill="#fff"/></svg></button>
  <div class="cortana">
    <svg width="22" height="22" viewBox="0 0 22 22"><circle cx="11" cy="11" r="9" fill="none" stroke="#f4f4f4" stroke-width="3"/></svg>
    <input type="text" placeholder="在这里输入你要搜索的内容" aria-label="搜索">
    <svg width="12" height="18" viewBox="0 0 12 18"><rect x="3.500" y=".5" width="5" height="11" rx="1" fill="none" stroke="#aaa"/><path d="M.5 9v5h11V9M6 14v3M3 17.500h6" fill="none" stroke="#aaa"/></svg>
  </div>
  <button class="app"><svg width="22" height="22" viewBox="0 0 22 22"><path d="M5.500 4.500h11v13h-11zM3 5.500H1.500v11H3M19 5.500h1.500v11H19" fill="none" stroke="#fff"/></svg></button>
  <button class="app"><svg width="22" height="22" viewBox="0 0 22 22"><g fill="#e4e4e4"><rect x="1" y="1" width="9" height="9" rx="4"/><rect x="12" y="1" width="9" height="9" rx="4"/><rect x="1" y="12" width="9" height="9" rx="4"/><rect x="12" y="12" width="9" height="9" rx="4"/><path d="M5 1h5v9q-3-2-5-9zM21 5v5h-9q2-3 9-5zM17 21h-5v-9q3 2 5 9zM1 17v-5h9q-2 3-9 5z"/></g></svg></button>
  <button class="app"><svg width="22" height="22" viewBox="0 0 22 22"><path d="M4 13h15M18 13q1-8-6-8-7 1-7 8 0 6 7 6 4 0 6-3" fill="none" stroke="#f1f1f1" stroke-width="3.500"/><path d="M20 4q0-4-6-2Q5 5 2 13t4 6" fill="none" stroke="#f1f1f1" stroke-width="1.500"/></svg></button>
  <button class="app"><svg width="22" height="22" viewBox="0 0 22 22"><path d="M20 4q-7 2-10 0Q2 5 2 12t8 8q8-1 8-7 0-5-5-6-5 0-6 4 0 5 4 5 4-1 4-4-2-3-5-1M16 5q-8-1-12 5" fill="none" stroke="#e8e8e8" stroke-width="1.300"/></svg></button>
  <button class="app"><svg width="22" height="22" viewBox="0 0 22 22"><path d="M1 10Q3 1 12 1q9 1 9 11H8q1 6 12 3v4q-5 3-11 1-6-3-5-9 1-3 4-5-6 1-7 4zm7-1h7q0-4-3-4t-4 4z" fill="#0a78d6"/></svg></button>
  <button class="app near"><svg width="24" height="22" viewBox="0 0 24 22"><path d="M6 12h13q0-6-6-6t-7 7q1 6 7 6 5 0 6-4" fill="none" stroke="#46aaf0" stroke-width="3.500"/><path d="M22 5q1-5-6-2Q6 7 2 15q-2 6 4 5" fill="none" stroke="#f3c928" stroke-width="2"/></svg></button>
  <button class="app near"><svg width="22" height="20" viewBox="0 0 22 20"><path d="M1 2h7l2 2h11v15H1z" fill="#fce08a"/><path d="M4 12h14v7h-3v-3H7v3H4z" fill="#3aa6e2"/></svg></button>
  <button class="app near run"><svg width="22" height="22" viewBox="0 0 22 22"><circle cx="11" cy="11" r="10" fill="#58b72c" stroke="#e8f5e0" stroke-width="1.500"/><path d="M6 11.500h10q0-5-5-5t-5 5q0 5 5 5 4 0 5-3" fill="none" stroke="#fff" stroke-width="2.500"/><path d="M21 3q-6-2-14 5" stroke="#a6e34a" stroke-width="2" fill="none"/></svg></button>
  <button class="app near run"><svg width="24" height="22" viewBox="0 0 24 22"><path d="M24 2q-2 4-7 4-8-1-9 5 0 5 4 5 5-1 4-7 3-1 6 1 1 11-11 12Q1 21 1 12 2 2 11 1q5-1 8 1z" fill="#1c9be8"/></svg></button>
  <button class="app near run act"><svg width="24" height="24"><use href="#logo"/></svg></button>
  <button class="app near run"><svg width="24" height="24" viewBox="0 0 24 24"><rect width="24" height="24" rx="3" fill="url(#go)"/><path d="m3 6 12-2 3 14-12 3z" fill="#fff8e6"/><path d="m6 9 7-1M7 12l6-1M8 15l5-1" stroke="#b88"/><path d="M22 2 12 15l-1 3 3-2L23 4z" fill="#8a4a12"/></svg></button>
  <span class="link">链接</span>
  <span class="cpu">41%<br>CPU使用</span>
  <div class="tray">
    <svg width="12" height="8" viewBox="0 0 12 8"><path d="m1 7 5-5 5 5" fill="none" stroke="#fff" stroke-width="1.300"/></svg>
    <svg width="12" height="14"><use href="#bell"/></svg>
    <svg width="16" height="12" viewBox="0 0 16 12"><path d="M4.500 3.500h10v7h-10zM14.500 5.500h1.500v3" fill="none" stroke="#fff"/><path d="M6 5h7v4H6zM0 3h6v3H4v6H3V6H0zM1 0h1v3H1zM4 0h1v3H4z" fill="#fff"/></svg>
    <svg width="14" height="14" viewBox="0 0 14 14"><path d="M1 12Q1 2 13 1M4 13q0-8 9-8.500M7 13q0-5 6-5M10 13q0-2 3-2" fill="none" stroke="#ddd"/><path d="M11 11h3v3h-3z" fill="#fff"/></svg>
    <svg width="16" height="14" viewBox="0 0 16 14"><path d="M1 5h2l4-4v12L3 9H1z" fill="none" stroke="#fff"/><path d="M9 5q1 2 0 4M11 3q3 4 0 8M13 1q4 6 0 12" fill="none" stroke="#aaa"/></svg>
    <svg width="24" height="14" viewBox="0 0 24 14"><rect x=".5" y=".5" width="22" height="12" fill="none" stroke="#fff"/><path d="M3 3.500h18M3 6.500h18" stroke="#fff" stroke-dasharray="2 1"/><path d="M6 9.500h12" stroke="#fff"/></svg>
  </div>
  <time class="clock">19:13<br>2018/7/23</time>
  <button class="note" aria-label="通知"><svg width="17" height="19" viewBox="0 0 17 19"><path d="M.5 1.500h15v12H10l-2 3-2-3H.5z" fill="none" stroke="#fff" stroke-width="1.300"/></svg></button>
</div>
</body>
</html>
```
FILE: styles.css
```css
* { box-sizing: border-box; }
body { margin: 0; height: 100vh; display: flex; flex-direction: column; overflow: hidden; position: relative; background: #f0f0f0; color: #000; font: 12px/16px "Noto Sans", "Noto Sans CJK SC", sans-serif; white-space: nowrap; }
button, input, select { font: inherit; color: inherit; background: none; border: 0; padding: 0; margin: 0; border-radius: 0; }
h1, h2 { margin: 0; font-size: 12px; font-weight: 400; }
ul { list-style: none; margin: 0; padding: 0; }
svg { flex: none; display: block; }
i { font-style: normal; }
.defs { position: absolute; width: 0; height: 0; }
.i16 { width: 16px; height: 16px; }
.m { font: 10px/15px "Liberation Mono", monospace; }
.caret { width: 7px; height: 4px; margin: 0 3px 0 6px; background: currentColor; clip-path: polygon(0 0, 100% 0, 50% 100%); flex: none; }
.strip { display: flex; align-items: center; background: linear-gradient(#fdfdfd, #f1f1f1); border-radius: 3px; }
.tb { display: flex; align-items: center; gap: 4px; flex: none; }
.tb .caret { margin-left: 2px; }
.tb .caret.near { margin: 0 0 0 -2px; }
.off { color: #8a8a8a; }
.sep { width: 1px; height: 18px; background: #bdbdbd; flex: none; }
.end { margin-left: auto; }
.more { font: bold 15px/14px "Liberation Sans", sans-serif; align-self: flex-start; }

.titlebar { display: flex; align-items: center; height: 24px; background: #fff; padding-left: 2px; gap: 6px; flex: none; }
.title { color: #999; flex: 1; overflow: hidden; }
.path { font-size: 13px; }
.winctl { display: flex; gap: 36px; padding-right: 14px; }
.gx { color: #777; }
.ball { position: absolute; left: 778px; top: -31px; width: 48px; height: 48px; border-radius: 50%; background: linear-gradient(#2fae52, #45c463); border: 2px solid #a8dcb4; box-shadow: 0 1px 4px #888; color: #fff; font: bold 11px/16px "DejaVu Sans", sans-serif; text-align: center; padding-top: 28px; z-index: 5; }
.ime { position: absolute; left: 973px; top: 3px; height: 24px; border: 1px solid #9db9d8; background: #fff; display: flex; align-items: center; gap: 6px; padding: 0 5px 0 0; color: #1f6fc0; z-index: 5; }
.ime b { font-size: 14px; }
.sogou { width: 28px; height: 28px; margin: -2px 0 0 -6px; }

.menubar { display: flex; align-items: center; height: 30px; flex: none; }
.menu { display: flex; gap: 11px; padding: 0 12px 0 7px; }
.menubar > .tb + .tb { margin-left: 2px; }
.strip.tip { width: 188px; height: 28px; margin-left: 7px; justify-content: center; }
.tip a { color: #2f6000; text-decoration: none; }
.account { flex: 1; height: 28px; padding: 0 3px 0 5px; gap: 6px; }
.account > svg { margin-left: 5px; }
.blue { color: #1e90ff; }

.toolbars { display: flex; height: 30px; flex: none; gap: 4px; }
.toolbars .strip { height: 28px; gap: 7px; }
.toolbars .files { width: 149px; padding-left: 5px; gap: 6px; }
.files .caret, .files .tb { margin-right: 0; }
.toolbars .draw { width: 548px; padding: 0 4px; }
.toolbars .view { flex: 1; padding-right: 4px; }
.sigma { width: 16px; font: bold 15px/16px "Liberation Serif", serif; text-align: center; }
.view .tb .caret { margin: 0 0 0 1px; }
.boxed { border: 1px solid #777; height: 24px; padding-right: 4px; }
.boxed + .tb { margin-left: -3px; }
.view .tight .caret { margin: 0 -3px 0 -2px; }
.view .tight + .sep { margin-right: -2px; }

.main { display: flex; flex: 1; min-height: 0; gap: 6px; }
.nav { width: 168px; display: flex; flex-direction: column; flex: none; padding-bottom: 2px; border-right: 1px solid #999; }
.navhead { display: flex; align-items: center; height: 15px; border: 1px solid #888; gap: 8px; padding-right: 3px; margin-bottom: 2px; flex: none; }
.navhead h2 { flex: 1; line-height: 13px; }
.bar { height: 22px; border: 1px solid #999; border-top-color: #b8b8b8; background: #f0f0f0; flex: none; text-align: center; }
.navtools { display: flex; gap: 7px; height: 26px; align-items: center; padding-left: 7px; margin-top: 1px; background: linear-gradient(#fdfdfd, #f1f1f1); flex: none; }
.tree { flex: 1; min-height: 0; display: grid; grid-template: 1fr 17px / 1fr 17px; border: 1px solid #828790; margin: 0 1px 2px 2px; background: #fff; }
.nodes { padding-top: 1px; overflow: hidden; }
.nodes li { display: flex; align-items: center; height: 16px; }
.leaf { padding-left: 43px; --v: repeating-linear-gradient(#777 0 1px, transparent 1px 2px); --h: repeating-linear-gradient(90deg, #777 0 1px, transparent 1px 2px); --trunk: 1px; background: var(--v) 12px 0 / var(--trunk) 100% no-repeat, var(--v) 31px 0 / 1px 100% no-repeat, var(--h) 31px 8px / 11px 1px no-repeat; }
.leaf.last { background: var(--v) 12px 0 / var(--trunk) 100% no-repeat, var(--v) 31px 0 / 1px 8px no-repeat, var(--h) 31px 8px / 11px 1px no-repeat; }
.leaf.tail { --trunk: 0px; }
.leaf .i16, .dir .i16 { margin-right: 4px; }
.dir { padding-left: 6px; }
.chev { width: 11px; height: 11px; margin-right: 6px; }
.cur { display: flex; align-items: center; background: #d9d9d9; padding-right: 1px; }
.vscroll { display: flex; flex-direction: column; align-items: center; background: #f0f0f0; padding: 5px 0; width: 17px; }
.vscroll svg, .hscroll svg { width: 10px; height: 10px; }
.vscroll .rest { flex: 1; }
.vscroll .thumb { width: 15px; background: #cdcdcd; flex: none; }
.tree .vscroll { padding: 4px 0; }
.tree .vscroll .rest { flex: 222; }
.tree .vscroll .thumb { flex: 213; margin-bottom: 4px; }
.hscroll { grid-column: 1 / 3; display: flex; align-items: center; background: #f0f0f0; padding: 0 22px 0 5px; gap: 3px; }
.hscroll .thumb { height: 15px; flex: 1; background: #cdcdcd; margin-right: 4px; }

.work { flex: 1; min-width: 0; display: flex; flex-direction: column; }
.comps { height: 27px; gap: 7px; padding-left: 4px; flex: none; }
.comps .sep { margin-left: -2px; }
.comps .sep + label { margin-left: -4px; }
.combo { display: flex; align-items: center; justify-content: space-between; background: #fff; height: 22px; padding-left: 3px; width: 51px; flex: none; }
.combo.wide { width: 62px; }
.combo select { appearance: none; flex: 1; min-width: 0; }
.combo .caret { margin: 0 3px 0 0; }
.comps .combo { margin: 0 -2px 0 -2px; }
.comps .combo + .sep { margin: 0 -2px 0 0; }
.cols { display: flex; flex: 1; min-height: 0; gap: 4px; }
.list { width: 183px; display: flex; flex-direction: column; flex: none; padding-bottom: 3px; }
.search { display: flex; background: #fff; height: 31px; padding: 5px 6px 2px 1px; justify-content: space-between; align-items: center; flex: none; }
.search input { width: 157px; height: 24px; border: 1px solid #7a7a7a; padding: 0 0 4px 2px; background: #fff; }
.search input::placeholder { color: #777; }
.listbox { flex: 1; min-height: 0; display: flex; background: #fff; border: 1px solid #828790; border-bottom-width: 2px; }
.items { flex: 1; padding-top: 1px; overflow: hidden; }
.items li { display: flex; align-items: center; height: 16px; padding-left: 40px; font: 10px/16px "Liberation Mono", monospace; --v: repeating-linear-gradient(#777 0 1px, transparent 1px 2px); background: var(--v) 31px 0 / 1px 100% no-repeat, repeating-linear-gradient(90deg, #777 0 1px, transparent 1px 2px) 31px 8px / 11px 1px no-repeat; }
.items li.last { background: var(--v) 31px 0 / 1px 8px no-repeat, repeating-linear-gradient(90deg, #777 0 1px, transparent 1px 2px) 31px 8px / 9px 1px no-repeat; }
.items svg { width: 12px; height: 12px; margin: 0 7px 0 3px; }
.pick { display: flex; align-items: center; background: #316ac5; padding-right: 4px; }
.listbox .vscroll .rest { flex: 450; }
.listbox .vscroll .thumb { flex: 79; margin-bottom: 3px; }

.props { flex: 1; min-width: 0; display: flex; flex-direction: column; background: #fff; border-left: 1px solid #d5d5d5; padding: 1px 3px 3px; }
.tabs { display: flex; height: 21px; flex: none; margin: 0 -3px 4px; }
.tab { width: 63px; border-right: 1px solid #d5d5d5; }
.fill { flex: 1; border-bottom: 1px solid #d5d5d5; }
.sheet { flex: 1; min-height: 0; display: flex; justify-content: space-between; align-items: stretch; border: 1px solid #a8a8a8; }
.sheet table { border-collapse: collapse; table-layout: fixed; width: 383px; align-self: flex-start; }
.c1 { width: 21px; } .c2 { width: 191px; }
.sheet th, .sheet td { height: 19px; padding: 0 0 0 2px; border: 1px solid #b9b9b9; text-align: left; font-weight: 400; line-height: 15px; }
.sheet th { background: linear-gradient(90deg, #fafafa, #ededed); text-align: center; padding: 0; }
.sheet thead th { height: 22px; background: linear-gradient(#fafafa, #ededed); }
.sheet thead th.hot { background: linear-gradient(#fadc9e, #efbd5c); color: #600060; }
.sheet tbody th { font: 10px/15px "Liberation Mono", monospace; }
.sheet td.nm { padding-left: 19px; }
.sheet .key { color: #00f; }
.sheet td.grp { padding-left: 2px; color: #888; }
.sheet td.sub { padding-left: 29px; background: linear-gradient(#c0c0c0, #c0c0c0) 8px 0 / 1px 100% no-repeat, linear-gradient(#c0c0c0, #c0c0c0) 8px 9px / 16px 1px no-repeat; }
.sheet td.sub.last { background: linear-gradient(#c0c0c0, #c0c0c0) 8px 0 / 1px 9px no-repeat, linear-gradient(#c0c0c0, #c0c0c0) 8px 9px / 16px 1px no-repeat; }
.sheet .sel th { background: #fdd08a; color: #600000; }
.sheet .sel td { background: #d9eaf9; }
.sheet .sel td.nm { background: #0078d7; color: #fff; }
.tog { width: 12px; height: 12px; border: 1px solid #b0b0b0; background: #fff; color: #000; line-height: 10px; margin-right: 5px; vertical-align: middle; text-align: center; }
.sheet .vscroll .thumb { flex: 395; margin-top: 3px; }
.sheet .vscroll .rest { flex: 138; }

.ring { position: absolute; left: 355px; top: 339px; width: 354px; height: 38px; }

.dialog { position: absolute; left: 718px; right: 19px; top: 83px; bottom: 65px; display: flex; flex-direction: column; background: linear-gradient(#99b4d1, #b9d1ea 32px); border: 1px solid #2b2b2b; box-shadow: inset 0 0 0 1px #d8e6f4; padding: 0 7px 6px; }
.dialog h2 { height: 31px; line-height: 38px; flex: none; }
.client { flex: 1; min-height: 0; display: flex; flex-direction: column; border: 1px solid #d9d9d9; outline: 1px solid #f0f0f0; background: #f0f0f0; padding: 5px 4px 0; box-shadow: inset 0 0 0 2px #fff; }
.rowa, .rowb { height: 27px; align-self: flex-start; padding: 0 6px; gap: 7px; margin-bottom: 1px; flex: none; }
.rowa .tb .caret { margin: 0 0 0 3px; }
.rowa .combo { margin: 0 -2px 0 -3px; }
.rowa .combo + .sep { margin: 0 -5px 0 0; }
.rowa .tb + .sep { margin-left: -1px; }
.on { border: 1px solid #1080d8; background: #dcebf8; height: 23px; padding: 0 3px; }
.rowa .on { gap: 7px; padding: 0 2px 0 4px; margin-right: -2px; }
.rowa .on ~ .sep { margin-right: -2px; }
.rowb span { margin: 0 -7px 0 -4px; }
.rowb .on { padding: 0 4px; }
.canvas { flex: 1; min-height: 0; width: 100%; background: #13161e; border: 2px solid #f00; }
.canvas .big { font: 24px "Noto Sans CJK SC", sans-serif; }
.canvas .num { font: 12px "Noto Sans", sans-serif; }
.canvas .la { font: bold 9px "Liberation Mono", monospace; fill: #0f0; }
.rowc { height: 28px; align-self: flex-start; padding: 0 4px 0 0; gap: 7px; margin-top: 1px; flex: none; }
.rowc .on { padding: 0 3px 0 2px; }
.rowc .on + .on { margin-left: -7px; }
.dstat { display: flex; align-items: center; height: 24px; background: linear-gradient(#fdfdfd, #f0f0f0); margin-top: 3px; border: 1px solid #d5d5d5; flex: none; }
.xy { width: 97px; padding-left: 3px; border-right: 1px solid #d0d0d0; }
.hint { flex: 1; padding-left: 3px; }
.dstat svg { align-self: flex-end; }

.status { display: flex; height: 20px; gap: 2px; flex: none; }
.status span { border: 1px solid #d0d0d0; background: linear-gradient(#fdfdfd, #f2f2f2); padding-left: 1px; line-height: 18px; flex: none; }
.status .s1 { width: 148px; } .status .s2 { width: 79px; } .status .s3 { width: 98px; } .status .s4 { width: 48px; }
.status .s5 { flex: 1; } .status .s6 { width: 71px; }

.taskbar { display: flex; align-items: center; height: 40px; background: #01090c; color: #eee; flex: none; }
.start { width: 48px; height: 40px; padding-left: 16px; background: #000; }
.cortana { width: 344px; height: 40px; background: #333; display: flex; align-items: center; gap: 5px; padding: 0 14px 0 9px; }
.cortana input { flex: 1; font-size: 14px; }
.cortana input::placeholder { color: #949494; }
.app { width: 51px; height: 40px; display: flex; align-items: center; justify-content: center; flex: none; border-bottom: 2px solid transparent; border-top: 2px solid transparent; }
.cortana + .app { width: 48px; }
.app.near { width: 45px; }
.app:not(.near) + .near { margin-left: -3px; }
.run { border-bottom-color: #76b9ed; background-clip: padding-box; }
.act { background: #30393d; border-top-color: #30393d; }
.link { margin-left: 12px; }
.cpu { margin-left: 20px; line-height: 17px; text-align: center; }
.tray { display: flex; align-items: center; margin-left: 20px; gap: 12px; }
.clock { margin-left: auto; line-height: 19px; text-align: center; }
.note { margin: 0 24px 0 19px; }
```
